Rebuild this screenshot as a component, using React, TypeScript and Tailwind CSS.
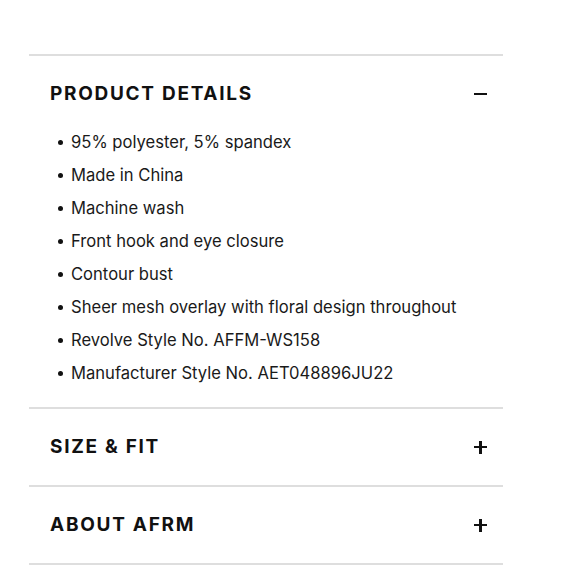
import React, { useState } from "react";

const details = [
  "95% polyester, 5% spandex",
  "Made in China",
  "Machine wash",
  "Front hook and eye closure",
  "Contour bust",
  "Sheer mesh overlay with floral design throughout",
  "Revolve Style No. AFFM-WS158",
  "Manufacturer Style No. AET048896JU22",
];

const Section = ({
  title,
  open,
  onToggle,
  children,
}: {
  title: string;
  open: boolean;
  onToggle: () => void;
  children?: React.ReactNode;
}) => (
  <div className="border-t-2 border-[#dedede]">
    <button
      onClick={onToggle}
      className="flex h-[76px] w-full items-center justify-between pl-[21px] pr-[16px] text-left"
    >
      <span className="text-[19px] font-bold tracking-[0.09em] text-[#111]">{title}</span>
      <span className="relative block h-[13px] w-[13px]">
        <span className="absolute left-0 top-[5px] h-[2.5px] w-[13px] bg-[#111]" />
        {!open && <span className="absolute left-[5px] top-0 h-[13px] w-[2.5px] bg-[#111]" />}
      </span>
    </button>
    {open && children}
  </div>
);

export default function App() {
  const [open, setOpen] = useState<string | null>("details");
  const toggle = (key: string) => setOpen(open === key ? null : key);

  return (
    <div
      className="min-h-[580px] bg-white pt-[54px]"
      style={{ fontFamily: "Inter, 'Open Sans', sans-serif" }}
    >
      <div className="ml-[29px] w-[474px] border-b-2 border-[#dedede]">
        <Section title="PRODUCT DETAILS" open={open === "details"} onToggle={() => toggle("details")}>
          <ul className="space-y-[13px] pb-[24px] pl-[42px]">
            {details.map((d) => (
              <li key={d} className="flex items-center text-[16.6px] leading-5 text-[#1a1a1a]">
                <span className="-ml-[13px] mr-[8px] h-[5px] w-[5px] rounded-full bg-[#111]" />
                {d}
              </li>
            ))}
          </ul>
        </Section>
        <Section title="SIZE & FIT" open={open === "size"} onToggle={() => toggle("size")} />
        <Section title="ABOUT AFRM" open={open === "about"} onToggle={() => toggle("about")} />
      </div>
    </div>
  );
}
